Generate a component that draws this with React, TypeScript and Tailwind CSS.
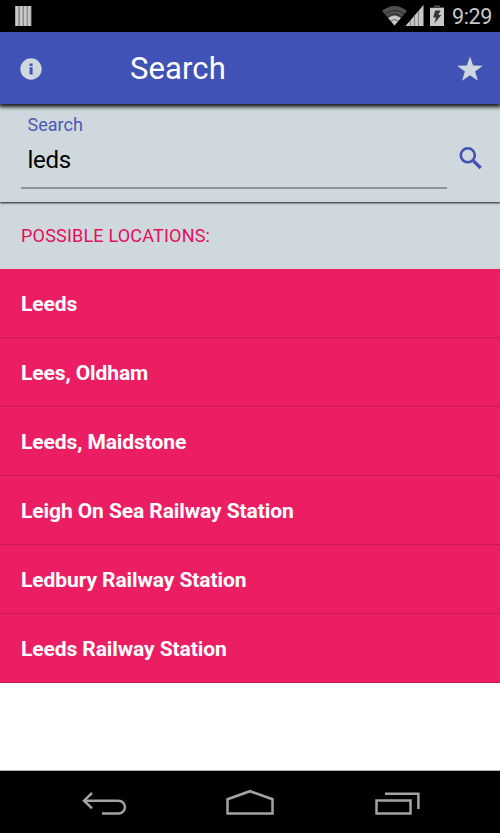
const locations = [
  "Leeds",
  "Lees, Oldham",
  "Leeds, Maidstone",
  "Leigh On Sea Railway Station",
  "Ledbury Railway Station",
  "Leeds Railway Station",
];

const StatusBar = () => {
  return (
    <div className="flex h-8 shrink-0 items-start justify-between bg-black pl-[15px] pr-2">
      <svg className="mt-[6px]" width="17" height="20" viewBox="0 0 17 20">
        <path d="M0 0h16.5v20H0z" fill="#8b8b8b" />
        <path d="M.7 0h2.6v20H.7zM5 0h2.6v20H5zM9 0h2.6v20H9zM13 0h2.6v20H13z" fill="#c8c8c8" />
      </svg>
      <div className="flex items-start">
        <svg className="mt-[5px]" width="63" height="22" viewBox="0 0 63 22">
          <path d="M0 6Q12.500-4 25 6L12.500 20.500z" fill="#505050" />
          <path d="M6.200 13Q12.500 8 18.800 13L12.500 20.500z" fill="#c8c8c8" />
          <path d="M2.700 9.200Q12.500 1.500 22.300 9.200M5.400 12.100Q12.500 6 19.600 12.100M8.800 16Q12.500 13 16.200 16" fill="none" stroke="#000" strokeOpacity=".65" strokeWidth=".8" />
          <path d="M23.500 21L41.500 0v21z" fill="#c8c8c8" />
          <path d="M28.500 15v6M32.500 10.500v10.500M36.500 6v15" stroke="#858585" strokeWidth="1.200" />
          <path d="M48 2.500V2h4V.5h6V2h4v1z" fill="#555" />
          <path d="M48 3h14v18H48z" fill="#c8c8c8" />
          <path d="M53.200 5.500h5.300l-2.200 4.500h3l-7 8.500 1.700-6h-2.800z" fill="#333" />
        </svg>
        <span className="ml-[7px] mt-[3px] w-[40px] whitespace-nowrap text-[21.500px] leading-[28px] tracking-[-0.4px] text-[#c8c8c8]">9:29</span>
      </div>
    </div>
  );
};

const Header = () => {
  return (
    <header className="relative z-20 flex h-[72px] shrink-0 items-center bg-[#4052b5] pl-5 pr-[15px] shadow-[0_2px_4px_1px_rgba(0,0,0,0.9)]">
      <svg className="mt-[2px]" width="22" height="22" viewBox="0 0 22 22">
        <circle cx="11" cy="11" r="10.700" fill="#cfd8dd" />
        <path d="M9.600 5.400h3v2.500h-3zM9.600 9.300h3v7.200h-3z" fill="#4052b5" />
      </svg>
      <h1 className="ml-[88px] mt-[2px] flex-1 text-[31px] leading-9 tracking-[0.1px] text-white">Search</h1>
      <svg className="mt-[4px]" width="30" height="30" viewBox="0 0 30 30">
        <path d="M15 1.500l3.100 9 9.700.3-7.700 5.800 2.900 9.200-8-5.500-8 5.500 2.900-9.200-7.700-5.800 9.700-.3z" fill="#cfd8dd" />
      </svg>
    </header>
  );
};

const SearchBox = () => {
  return (
    <div className="relative z-10 flex h-[98px] shrink-0 bg-[#cfd8dd] pl-[21px] pr-[16px] shadow-[0_1px_2px_0_rgba(0,0,0,0.9)]">
      <div className="mb-[13px] flex w-[426px] flex-col border-b-2 border-[#8d9496] pl-[6.500px]">
        <label className="mt-[11px] text-[18px] leading-5 text-[#4a5ab4]">Search</label>
        <span className="mt-[11px] text-[24px] leading-7 tracking-[-0.3px] text-black">leds</span>
      </div>
      <svg className="ml-[11px] mt-[41px]" width="26" height="26" viewBox="0 0 26 26">
        <circle cx="9.800" cy="10.300" r="7" fill="none" stroke="#4052b5" strokeWidth="2.600" />
        <path d="M15.500 16l7.200 7" stroke="#4052b5" strokeWidth="3.200" />
      </svg>
    </div>
  );
};

const NavBar = () => {
  return (
    <div className="h-[63px] shrink-0 border-t border-[#b0b0b0] bg-black">
      <svg width="500" height="62" viewBox="0 0 500 62" fill="none" stroke="#a3a3a3" strokeWidth="2.500">
        <path d="M92 22l-8 7.700 8 7.700M84 29.700h34.500a6.400 6.400 0 0 1 0 12.900H102" />
        <path d="M227.500 42.400V28.200l22.500-8 22.500 8v14.200z" />
        <path d="M376.500 29.500h34v12.900h-34zM385 22.800h33.400V38" />
      </svg>
    </div>
  );
};

const App = () => {
  return (
    <div className="flex h-[833px] w-[500px] flex-col overflow-hidden bg-white font-['Roboto',sans-serif]">
      <StatusBar />
      <Header />
      <SearchBox />
      <div className="flex h-[67px] shrink-0 items-center bg-[#cfd8dd] pl-[21px] text-[18px] tracking-[0.2px] text-[#e60f5c]">
        POSSIBLE LOCATIONS:
      </div>
      <ul className="flex-1">
        {locations.map((location) => (
          <li
            key={location}
            className="flex h-[69px] items-center border-b border-[#c91a56] bg-[#ec1e63] pl-[21px] pt-[3px] text-[21px] font-bold tracking-[-0.09px] text-white"
          >
            {location}
          </li>
        ))}
      </ul>
      <NavBar />
    </div>
  );
};

export default App;
